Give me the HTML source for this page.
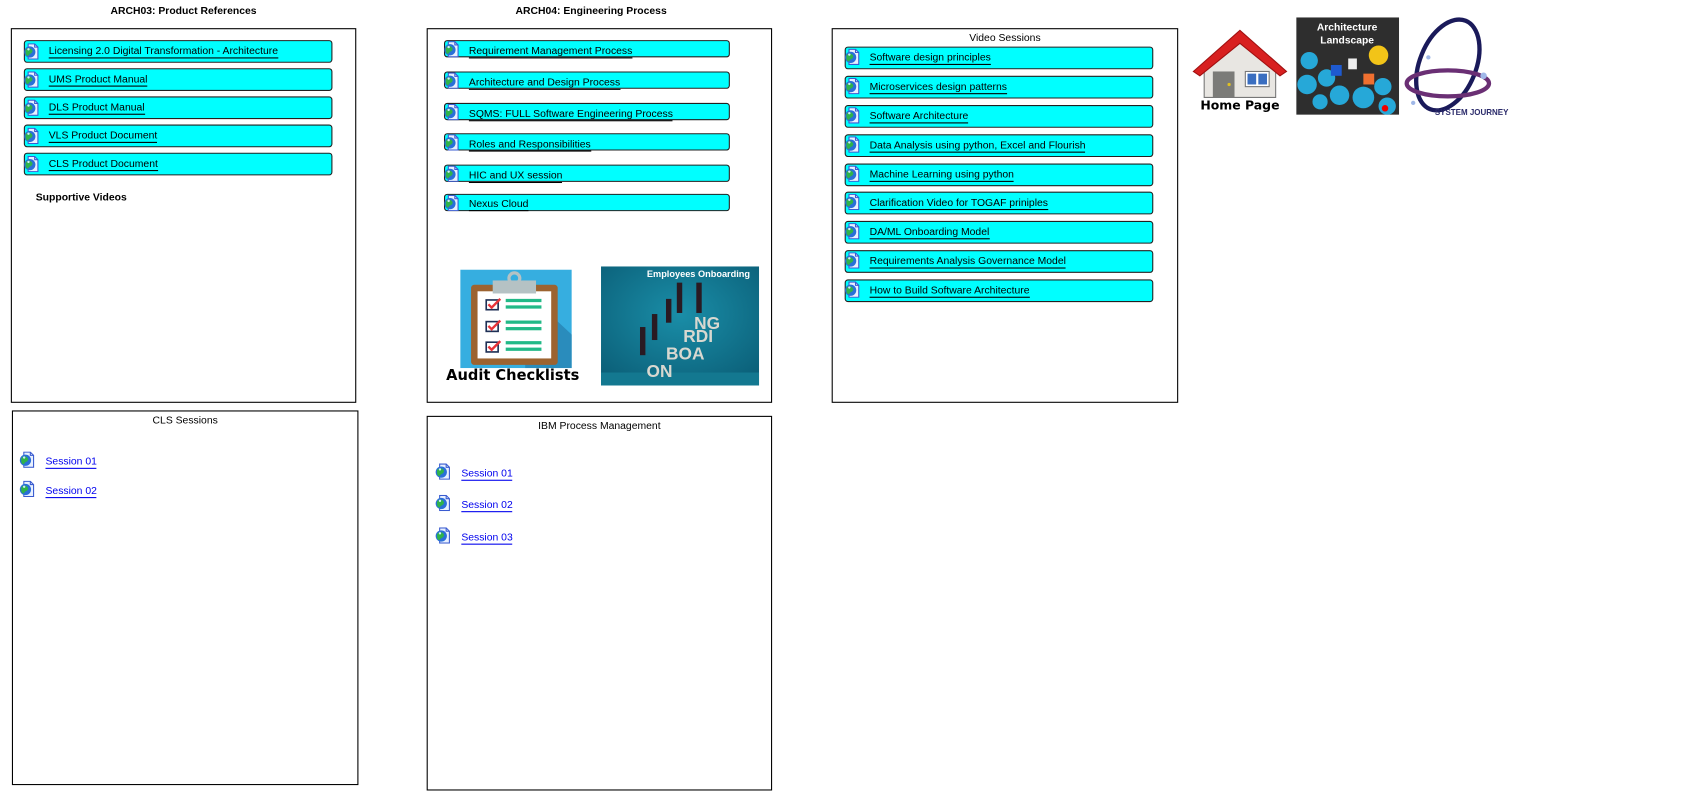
<!DOCTYPE html>
<html><head><meta charset="utf-8">
<style>
html,body{margin:0;padding:0;background:#fff;width:1698px;height:799px;overflow:hidden}
#s{position:absolute;left:0;top:0;width:1568px;height:738px;transform:scale(1.0829);transform-origin:0 0;font-family:"Liberation Sans",Tahoma,sans-serif;font-size:9.6px;color:#000}
.a{position:absolute}
.box{position:absolute;border:1px solid #000;box-sizing:border-box;background:#fff}
.t{position:absolute;font-weight:bold;font-size:9.6px;white-space:nowrap}
.row{position:absolute;background:#00ffff;border:1px solid #222;border-radius:3px;box-sizing:border-box}
.row span{position:absolute;left:22px;white-space:nowrap;color:#000;border-bottom:1px solid #000;line-height:11px}
.ic{position:absolute;left:-1px;top:1px;width:14px;height:15px}
.lk{position:absolute;color:#0000ee;white-space:nowrap;border-bottom:1px solid #0000ee;line-height:11px}
.st{position:absolute;white-space:nowrap;text-align:center}
</style></head><body><div id="s">
<svg width="0" height="0" style="position:absolute"><defs>
<symbol id="g" viewBox="0 0 14 15"><path d="M4 .5h6l3 3v11H4z" fill="#e8f0ff" stroke="#3a5bd0" stroke-width="1"/><path d="M10 .5v3h3" fill="none" stroke="#3a5bd0"/><circle cx="5.5" cy="8" r="5.2" fill="#2a6fd8"/><path d="M1.5 6.5c1.5-2.5 3.5-2.5 5-1.5s2 2 1 3.5-2.5 1-3 2.5-2 .5-2.8-1z" fill="#2fb34a"/><circle cx="4.3" cy="5.5" r="1.1" fill="#cfe8ff"/></symbol>
</defs></svg>

<div class="t" style="left:102px;top:5px">ARCH03: Product References</div>
<div class="box" style="left:10px;top:26px;width:319px;height:346px">
</div>
<div class="row" style="left:22px;top:37px;width:285px;height:21px"><svg class="ic" style="top:2px"><use href="#g"/></svg><span style="top:4px">Licensing 2.0 Digital Transformation - Architecture</span></div>
<div class="row" style="left:22px;top:63px;width:285px;height:21px"><svg class="ic" style="top:2px"><use href="#g"/></svg><span style="top:4px">UMS Product Manual</span></div>
<div class="row" style="left:22px;top:89px;width:285px;height:21px"><svg class="ic" style="top:2px"><use href="#g"/></svg><span style="top:4px">DLS Product Manual</span></div>
<div class="row" style="left:22px;top:115px;width:285px;height:21px"><svg class="ic" style="top:2px"><use href="#g"/></svg><span style="top:4px">VLS Product Document</span></div>
<div class="row" style="left:22px;top:141px;width:285px;height:21px"><svg class="ic" style="top:2px"><use href="#g"/></svg><span style="top:4px">CLS Product Document</span></div>
<div class="t" style="left:33px;top:177px">Supportive Videos</div>

<div class="t" style="left:476px;top:5px">ARCH04: Engineering Process</div>
<div class="box" style="left:394px;top:26px;width:319px;height:346px"></div>
<div class="row" style="left:410px;top:37px;width:264px;height:16px"><svg class="ic" style="top:0"><use href="#g"/></svg><span style="top:4px">Requirement Management Process</span></div>
<div class="row" style="left:410px;top:66px;width:264px;height:16px"><svg class="ic" style="top:0"><use href="#g"/></svg><span style="top:4px">Architecture and Design Process</span></div>
<div class="row" style="left:410px;top:95px;width:264px;height:16px"><svg class="ic" style="top:0"><use href="#g"/></svg><span style="top:4px">SQMS: FULL Software Engineering Process</span></div>
<div class="row" style="left:410px;top:123px;width:264px;height:16px"><svg class="ic" style="top:0"><use href="#g"/></svg><span style="top:4px">Roles and Responsibilities</span></div>
<div class="row" style="left:410px;top:152px;width:264px;height:16px"><svg class="ic" style="top:0"><use href="#g"/></svg><span style="top:4px">HIC and UX session</span></div>
<div class="row" style="left:410px;top:179px;width:264px;height:16px"><svg class="ic" style="top:0"><use href="#g"/></svg><span style="top:3px">Nexus Cloud</span></div>

<svg class="a" style="left:425px;top:249px" width="103" height="91" viewBox="0 0 103 91">
<rect width="103" height="91" fill="#36aee0"/>
<path d="M60 20L103 60V91H60z" fill="#2a8cbc"/>
<rect x="10" y="14" width="80" height="74" rx="3" fill="#9c6330"/>
<rect x="16" y="20" width="68" height="62" fill="#fff"/>
<rect x="30" y="10" width="40" height="12" fill="#b5c2c4"/>
<circle cx="50" cy="8" r="5" fill="none" stroke="#b5c2c4" stroke-width="3"/>
<g fill="#fff" stroke="#1e2f55" stroke-width="1.5"><rect x="24" y="28" width="11" height="9"/><rect x="24" y="48" width="11" height="9"/><rect x="24" y="67" width="11" height="9"/></g>
<g fill="none" stroke="#e8343a" stroke-width="2.2"><path d="M26 32l3 3 8-8"/><path d="M26 52l3 3 8-8"/><path d="M26 71l3 3 8-8"/></g>
<g fill="#22b987"><rect x="42" y="27" width="33" height="3"/><rect x="42" y="33" width="33" height="3"/><rect x="42" y="47" width="33" height="3"/><rect x="42" y="53" width="33" height="3"/><rect x="42" y="66" width="33" height="3"/><rect x="42" y="72" width="33" height="3"/></g>
</svg>
<div class="a" style="left:412px;top:339px;font-weight:bold;font-size:13.5px;white-space:nowrap;font-family:'DejaVu Sans',sans-serif">Audit Checklists</div>
<svg class="a" style="left:555px;top:246px" width="146" height="110" viewBox="0 0 146 110">
<defs><radialGradient id="rg" cx="50%" cy="40%" r="70%"><stop offset="0" stop-color="#1a8ea8"/><stop offset="1" stop-color="#0b5f78"/></radialGradient></defs>
<rect width="146" height="110" fill="url(#rg)"/>
<rect y="98" width="146" height="12" fill="#137890"/>
<text x="90" y="10" font-size="8.5" font-weight="bold" fill="#fff" text-anchor="middle" font-family="Liberation Sans Narrow,Liberation Sans,sans-serif">Employees Onboarding</text>
<g fill="#d8d8d0" font-weight="bold" font-family="Liberation Sans Narrow,Liberation Sans,sans-serif">
<text x="42" y="102" font-size="16">ON</text><text x="60" y="86" font-size="16">BOA</text><text x="76" y="70" font-size="16">RDI</text><text x="86" y="58" font-size="16">NG</text></g>
<g fill="#2a1a22"><rect x="70" y="15" width="5" height="28"/><rect x="88" y="15" width="5" height="28"/><rect x="60" y="30" width="5" height="22"/><rect x="47" y="44" width="5" height="24"/><rect x="36" y="56" width="5" height="26"/></g>
</svg>

<div class="box" style="left:768px;top:26px;width:320px;height:346px"></div>
<div class="st" style="left:768px;width:320px;top:30px">Video Sessions</div>
<div class="row" style="left:780px;top:43px;width:285px;height:21px"><svg class="ic" style="top:1px"><use href="#g"/></svg><span style="top:4px">Software design principles</span></div>
<div class="row" style="left:780px;top:70px;width:285px;height:21px"><svg class="ic" style="top:1px"><use href="#g"/></svg><span style="top:4px">Microservices design patterns</span></div>
<div class="row" style="left:780px;top:97px;width:285px;height:21px"><svg class="ic" style="top:1px"><use href="#g"/></svg><span style="top:4px">Software Architecture</span></div>
<div class="row" style="left:780px;top:124px;width:285px;height:21px"><svg class="ic" style="top:1px"><use href="#g"/></svg><span style="top:4px">Data Analysis using python, Excel and Flourish</span></div>
<div class="row" style="left:780px;top:151px;width:285px;height:21px"><svg class="ic" style="top:1px"><use href="#g"/></svg><span style="top:4px">Machine Learning using python</span></div>
<div class="row" style="left:780px;top:177px;width:285px;height:21px"><svg class="ic" style="top:1px"><use href="#g"/></svg><span style="top:4px">Clarification Video for TOGAF priniples</span></div>
<div class="row" style="left:780px;top:204px;width:285px;height:21px"><svg class="ic" style="top:1px"><use href="#g"/></svg><span style="top:4px">DA/ML Onboarding Model</span></div>
<div class="row" style="left:780px;top:231px;width:285px;height:21px"><svg class="ic" style="top:1px"><use href="#g"/></svg><span style="top:4px">Requirements Analysis Governance Model</span></div>
<div class="row" style="left:780px;top:258px;width:285px;height:21px"><svg class="ic" style="top:1px"><use href="#g"/></svg><span style="top:4px">How to Build Software Architecture</span></div>

<div class="box" style="left:11px;top:379px;width:320px;height:346px"></div>
<div class="st" style="left:11px;width:320px;top:383px">CLS Sessions</div>
<svg class="a" style="left:18px;top:417px" width="14" height="15"><use href="#g"/></svg><div class="lk" style="left:42px;top:421px">Session 01</div>
<svg class="a" style="left:18px;top:444px" width="14" height="15"><use href="#g"/></svg><div class="lk" style="left:42px;top:448px">Session 02</div>

<div class="box" style="left:394px;top:384px;width:319px;height:346px"></div>
<div class="st" style="left:394px;width:319px;top:388px">IBM Process Management</div>
<svg class="a" style="left:402px;top:428px" width="14" height="15"><use href="#g"/></svg><div class="lk" style="left:426px;top:432px">Session 01</div>
<svg class="a" style="left:402px;top:457px" width="14" height="15"><use href="#g"/></svg><div class="lk" style="left:426px;top:461px">Session 02</div>
<svg class="a" style="left:402px;top:487px" width="14" height="15"><use href="#g"/></svg><div class="lk" style="left:426px;top:491px">Session 03</div>

<svg class="a" style="left:1100px;top:22px" width="90" height="82" viewBox="0 0 90 82">
<path d="M12 40L45 14 78 40V68H12z" fill="#e8e6e2" stroke="#777" stroke-width="1"/>
<path d="M2 44L45 6 88 44 82 48 45 18 8 48z" fill="#d82020" stroke="#a01010"/>
<rect x="20" y="44" width="20" height="24" fill="#7b7b78"/><circle cx="35" cy="56" r="1.5" fill="#e0c020"/>
<rect x="50" y="44" width="22" height="14" fill="#fff" stroke="#777"/><rect x="52" y="46" width="8" height="10" fill="#3a6ec0"/><rect x="62" y="46" width="8" height="10" fill="#3a6ec0"/>
<text x="45" y="79" font-size="11.5" font-weight="bold" text-anchor="middle" font-family="DejaVu Sans,sans-serif">Home Page</text>
</svg>
<svg class="a" style="left:1197px;top:16px" width="95" height="90" viewBox="0 0 95 90">
<rect width="95" height="90" fill="#2e2e2e"/>
<g fill="#26a8d8"><circle cx="12" cy="40" r="8"/><circle cx="10" cy="62" r="9"/><circle cx="28" cy="56" r="8"/><circle cx="40" cy="72" r="9"/><circle cx="62" cy="74" r="10"/><circle cx="80" cy="64" r="8"/><circle cx="84" cy="82" r="8"/><circle cx="22" cy="78" r="7"/></g>
<circle cx="76" cy="35" r="9" fill="#f2c418"/><circle cx="82" cy="84" r="3" fill="#e00"/>
<rect x="32" y="44" width="10" height="10" fill="#1e5ad0"/><rect x="48" y="38" width="8" height="10" fill="#eee"/><rect x="62" y="52" width="10" height="10" fill="#f07030"/>
<text x="47" y="12" font-size="9.5" font-weight="bold" fill="#fff" text-anchor="middle">Architecture</text>
<text x="47" y="24" font-size="9.5" font-weight="bold" fill="#fff" text-anchor="middle">Landscape</text>
</svg>
<svg class="a" style="left:1297px;top:15px" width="100" height="95" viewBox="0 0 100 95">
<ellipse cx="40" cy="45" rx="26" ry="44" fill="none" stroke="#1a1a5a" stroke-width="4" transform="rotate(22 40 45)"/>
<ellipse cx="40" cy="62" rx="38" ry="12" fill="none" stroke="#6a2f74" stroke-width="4"/>
<circle cx="22" cy="38" r="2" fill="#a0b8e8"/><circle cx="73" cy="55" r="3" fill="#a0b8e8"/><circle cx="8" cy="80" r="2" fill="#a0b8e8"/>
<text x="28" y="91" font-size="8" font-weight="bold" fill="#2a2a6a" textLength="68" lengthAdjust="spacingAndGlyphs" font-family="Liberation Sans Narrow,Liberation Sans,sans-serif">SYSTEM JOURNEY</text>
</svg>
</div></body></html>
